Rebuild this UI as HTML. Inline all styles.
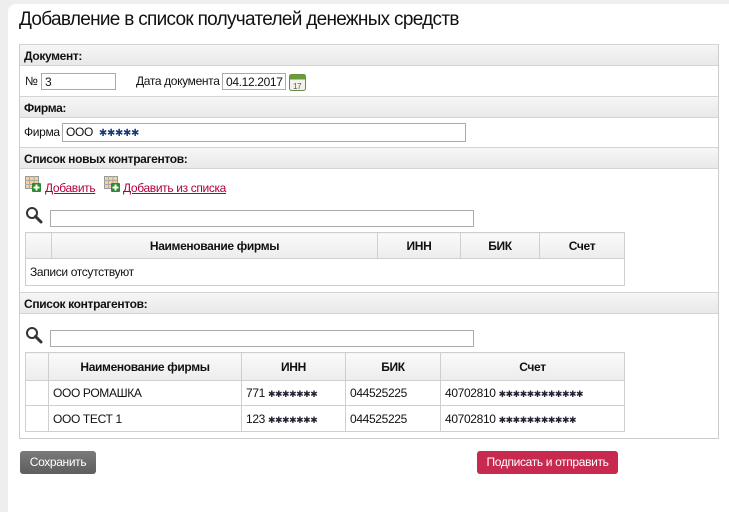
<!DOCTYPE html>
<html><head><meta charset="utf-8">
<style>
*{box-sizing:border-box;margin:0;padding:0}
body{width:729px;height:532px;background:#fff;position:relative;overflow:hidden;font-family:"Liberation Sans","DejaVu Sans",sans-serif;font-size:12px;color:#111;letter-spacing:-0.35px}
.bg{position:absolute;left:0;top:0;width:729px;height:512px;background:#eeeeee}
.panel{position:absolute;left:8px;top:4px;width:730px;height:508px;background:#fff;border-radius:8px 0 0 0}
.a{position:absolute}
.title{left:19px;top:9px;font-size:19px;color:#111;letter-spacing:-0.7px}
.box{left:19px;top:44px;width:700px;height:395px;border:1px solid #ccc}
.hdr{position:absolute;left:20px;width:698px;height:22px;background:linear-gradient(#f6f6f6,#e9e9e9);border-top:1px solid #d4d4d4;border-bottom:1px solid #d4d4d4;font-weight:bold;font-size:12px;padding:4px 0 0 4px}
.inp{position:absolute;border:1px solid #aaa;background:#fff;font-size:12px;padding:1px 3px;line-height:14px}
.link{position:absolute;color:#b0003a;text-decoration:underline;font-size:12px}
table{position:absolute;border-collapse:collapse;font-size:12px}
td,th{border:1px solid #cfcfcf;padding:0 4px}
th{background:linear-gradient(#fafafa,#ececec);font-weight:bold;text-align:center}
.btn{position:absolute;height:23px;border-radius:3px;color:#fff;font-size:12px;text-align:center;line-height:22px}
.st{font-size:9px;letter-spacing:-0.5px;color:#223}
</style></head><body>
<div class="bg"></div><div class="panel"></div>
<div class="a title">Добавление в список получателей денежных средств</div>
<div class="a box"></div>
<div class="hdr" style="top:44px">Документ:</div>
<div class="a" style="left:25px;top:74px">№</div>
<div class="inp" style="left:41px;top:73px;width:75px;height:17px">3</div>
<div class="a" style="left:136px;top:74px">Дата документа</div>
<div class="inp" style="left:222px;top:73px;width:64px;height:17px">04.12.2017</div>
<svg class="a" style="left:289px;top:73px" width="17" height="18"><rect x="0.5" y="1.5" width="16" height="16" rx="2" fill="#f2f2ea" stroke="#6a8a4a"/><rect x="0.5" y="1.5" width="16" height="5" fill="#6b9a3a"/><text x="4" y="16" font-size="8" fill="#555" font-family="Liberation Sans">17</text></svg>
<div class="hdr" style="top:96px">Фирма:</div>
<div class="a" style="left:24px;top:125px">Фирма</div>
<div class="inp" style="left:62px;top:123px;width:404px;height:19px">ООО &nbsp;<span style="color:#1a3a7a;font-size:10px">✱✱✱✱✱</span></div>
<div class="hdr" style="top:147px">Список новых контрагентов:</div>
<svg class="a" style="left:25px;top:176px" width="16" height="16"><rect x="0.5" y="0.5" width="13" height="12" fill="#f3d39a" stroke="#999"/><path d="M0 4.5H13M0 8.5H13M4.5 0V13M9 0V13" stroke="#aaa"/><rect x="7" y="7" width="9" height="9" rx="1" fill="#2e8a2e"/><path d="M11.5 8.5V14.5M8.5 11.5H14.5" stroke="#fff" stroke-width="2"/></svg>
<div class="link" style="left:45px;top:181px">Добавить</div>
<svg class="a" style="left:104px;top:176px" width="16" height="16"><rect x="0.5" y="0.5" width="13" height="12" fill="#f3d39a" stroke="#999"/><path d="M0 4.5H13M0 8.5H13M4.5 0V13M9 0V13" stroke="#aaa"/><rect x="7" y="7" width="9" height="9" rx="1" fill="#2e8a2e"/><path d="M11.5 8.5V14.5M8.5 11.5H14.5" stroke="#fff" stroke-width="2"/></svg>
<div class="link" style="left:123px;top:181px">Добавить из списка</div>
<svg class="a" style="left:25px;top:206px" width="18" height="18"><circle cx="7" cy="7" r="5" fill="none" stroke="#333" stroke-width="2"/><path d="M10.5 10.5L16 16" stroke="#333" stroke-width="3" stroke-linecap="round"/></svg>
<div class="inp" style="left:50px;top:210px;width:424px;height:17px"></div>
<table style="left:25px;top:232px;width:600px">
<tr style="height:26px"><th style="width:26px"></th><th style="width:326px">Наименование фирмы</th><th style="width:83px">ИНН</th><th style="width:79px">БИК</th><th>Счет</th></tr>
<tr style="height:27px"><td colspan="5">Записи отсутствуют</td></tr>
</table>
<div class="hdr" style="top:292px">Список контрагентов:</div>
<svg class="a" style="left:25px;top:326px" width="18" height="18"><circle cx="7" cy="7" r="5" fill="none" stroke="#333" stroke-width="2"/><path d="M10.5 10.5L16 16" stroke="#333" stroke-width="3" stroke-linecap="round"/></svg>
<div class="inp" style="left:50px;top:330px;width:424px;height:17px"></div>
<table style="left:25px;top:352px;width:600px">
<tr style="height:28px"><th style="width:23px"></th><th style="width:193px">Наименование фирмы</th><th style="width:104px">ИНН</th><th style="width:95px">БИК</th><th>Счет</th></tr>
<tr style="height:25px"><td></td><td>ООО РОМАШКА</td><td>771 <span class="st">✱✱✱✱✱✱✱</span></td><td>044525225</td><td>40702810 <span class="st">✱✱✱✱✱✱✱✱✱✱✱✱</span></td></tr>
<tr style="height:26px"><td></td><td>ООО ТЕСТ 1</td><td>123 <span class="st">✱✱✱✱✱✱✱</span></td><td>044525225</td><td>40702810 <span class="st">✱✱✱✱✱✱✱✱✱✱✱</span></td></tr>
</table>
<div class="btn" style="left:20px;top:451px;width:76px;background:linear-gradient(#7a7a7a,#5e5e5e)">Сохранить</div>
<div class="btn" style="left:477px;top:451px;width:141px;background:#c8294f">Подписать и отправить</div>
</body></html>
